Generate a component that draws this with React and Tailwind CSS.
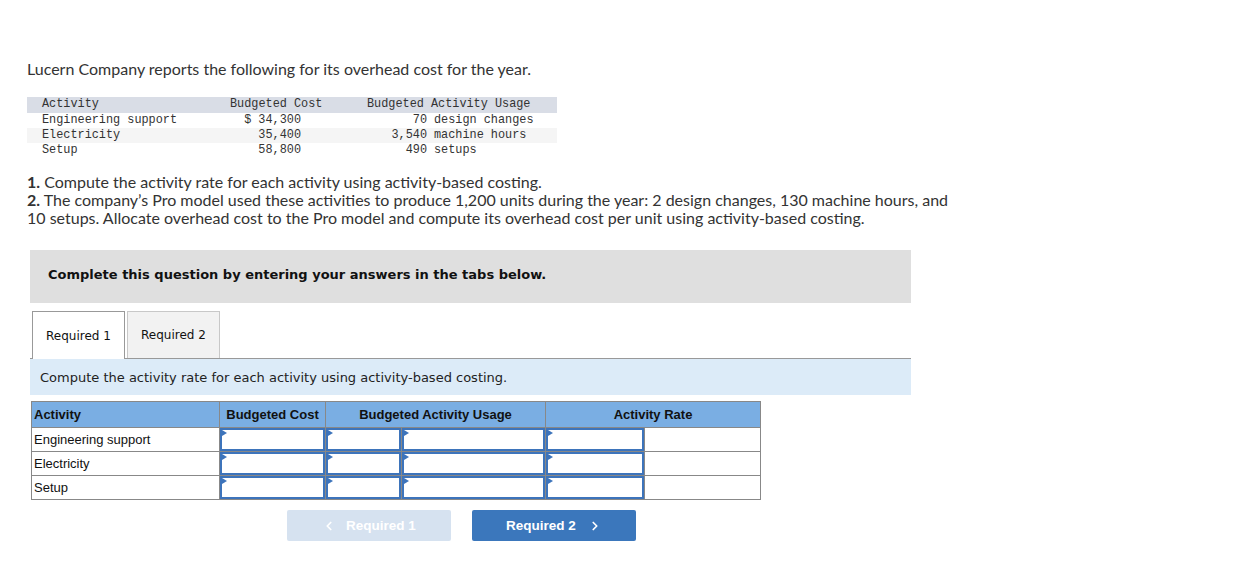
import { ChevronLeft, ChevronRight } from 'lucide-react'

const dataRows = [
  { name: 'Engineering support', cost: '$ 34,300', qty: '70', unit: 'design changes', bg: 'bg-white' },
  { name: 'Electricity', cost: '35,400', qty: '3,540', unit: 'machine hours', bg: 'bg-[#f5f5f5]' },
  { name: 'Setup', cost: '58,800', qty: '490', unit: 'setups', bg: 'bg-white' },
]

const activities = ['Engineering support', 'Electricity', 'Setup']

function InputCell({ w }) {
  return (
    <td className={`border border-[#888] p-0 ${w}`}>
      <div className="relative h-[23px] border-2 border-[#3d74bb] bg-white">
        <span className="absolute left-0 top-0 h-0 w-0 border-y-[3px] border-l-[5px] border-y-transparent border-l-[#3d74bb]"></span>
      </div>
    </td>
  )
}

function App() {
  return (
    <div className="min-h-[567px] bg-white pl-[27px] pt-[60px] text-[#222]">
      {/* intro */}
      <p className="text-[16px] leading-[18px] text-[#333]" style={{ fontFamily: 'Lato, sans-serif' }}>
        Lucern Company reports the following for its overhead cost for the year.
      </p>

      <div className="mt-[19px] w-[530px] text-[11.85px] text-[#333]" style={{ fontFamily: '"Liberation Mono", monospace' }}>
        <div className="flex h-[15.5px] items-center bg-[#d9dde6] pt-[1px]">
          <div className="w-[203px] pl-[15px]">Activity</div>
          <div className="w-[137px]">Budgeted Cost</div>
          <div>Budgeted Activity Usage</div>
        </div>
        {dataRows.map(r => (
          <div key={r.name} className={`flex h-[15.3px] items-center pt-[1px] ${r.bg}`}>
            <div className="w-[203px] pl-[15px]">{r.name}</div>
            <div className="w-[71px] text-right">{r.cost}</div>
            <div className="w-[126px] text-right">{r.qty}</div>
            <div className="pl-[7px]">{r.unit}</div>
          </div>
        ))}
      </div>

      <div className="mt-[15px] text-[16px] leading-[18px] text-[#333]" style={{ fontFamily: 'Lato, sans-serif' }}>
        <p><b>1.</b> Compute the activity rate for each activity using activity-based costing.</p>
        <p>
          <b>2.</b> The company’s Pro model used these activities to produce 1,200 units during the year: 2 design changes, 130 machine hours, and
          <br />
          10 setups. Allocate overhead cost to the Pro model and compute its overhead cost per unit using activity-based costing.
        </p>
      </div>

      {/* question panel */}
      <div className="ml-[3px] w-[881px]" style={{ fontFamily: '"DejaVu Sans", Verdana, sans-serif' }}>
        <div className="mt-[23px] flex h-[53px] items-center bg-[#dfdfdf] pb-[4px] pl-[18px] text-[13px] font-bold text-[#111]">
          Complete this question by entering your answers in the tabs below.
        </div>

        <div className="mt-[8px] flex gap-[2px] border-b border-[#999] pl-[2px]">
          <div className="-mb-px flex h-[48px] w-[93px] items-center justify-center border border-b-0 border-[#999] bg-white text-[12px] text-[#111]">
            Required 1
          </div>
          <div className="flex h-[47px] w-[93px] items-center justify-center border border-b-0 border-[#c8c8c8] bg-[#f2f2f2] text-[12px] text-[#111]">
            Required 2
          </div>
        </div>

        <div className="flex h-[36px] items-center bg-[#dcebf8] pl-[10px] text-[13px] text-[#222]">
          Compute the activity rate for each activity using activity-based costing.
        </div>

        <table className="ml-px mt-[6px] border-collapse text-[13px] text-[#111]" style={{ fontFamily: '"Liberation Sans", Arial, sans-serif' }}>
          <thead>
            <tr className="h-[26px] bg-[#7aaee3] font-bold">
              <th className="w-[188px] border border-[#888] px-[2px] text-left">Activity</th>
              <th className="w-[106px] border border-[#888] text-center">Budgeted Cost</th>
              <th colSpan={2} className="w-[220px] border border-[#888] text-center">Budgeted Activity Usage</th>
              <th colSpan={2} className="w-[215px] border border-[#888] text-center">Activity Rate</th>
            </tr>
          </thead>
          <tbody>
            {activities.map(a => (
              <tr key={a} className="h-[24px]">
                <td className="w-[188px] border border-[#888] px-[2px]">{a}</td>
                <InputCell w="w-[106px]" />
                <InputCell w="w-[76px]" />
                <InputCell w="w-[144px]" />
                <InputCell w="w-[99px]" />
                <td className="w-[116px] border border-[#888]"></td>
              </tr>
            ))}
          </tbody>
        </table>

        <div className="mt-[10px] flex gap-[21px] pl-[257px]" style={{ fontFamily: '"Liberation Sans", Arial, sans-serif' }}>
          <button className="flex h-[31px] w-[164px] items-center justify-center gap-[10px] rounded-[2px] bg-[#d6e2f0] text-[13.5px] font-bold text-white">
            <ChevronLeft size={14} strokeWidth={3} />
            Required 1
          </button>
          <button className="flex h-[31px] w-[164px] items-center justify-center gap-[12px] rounded-[2px] bg-[#3b77bc] text-[13.5px] font-bold text-white">
            Required 2
            <ChevronRight size={14} strokeWidth={3} />
          </button>
        </div>
      </div>
    </div>
  )
}

export default App
